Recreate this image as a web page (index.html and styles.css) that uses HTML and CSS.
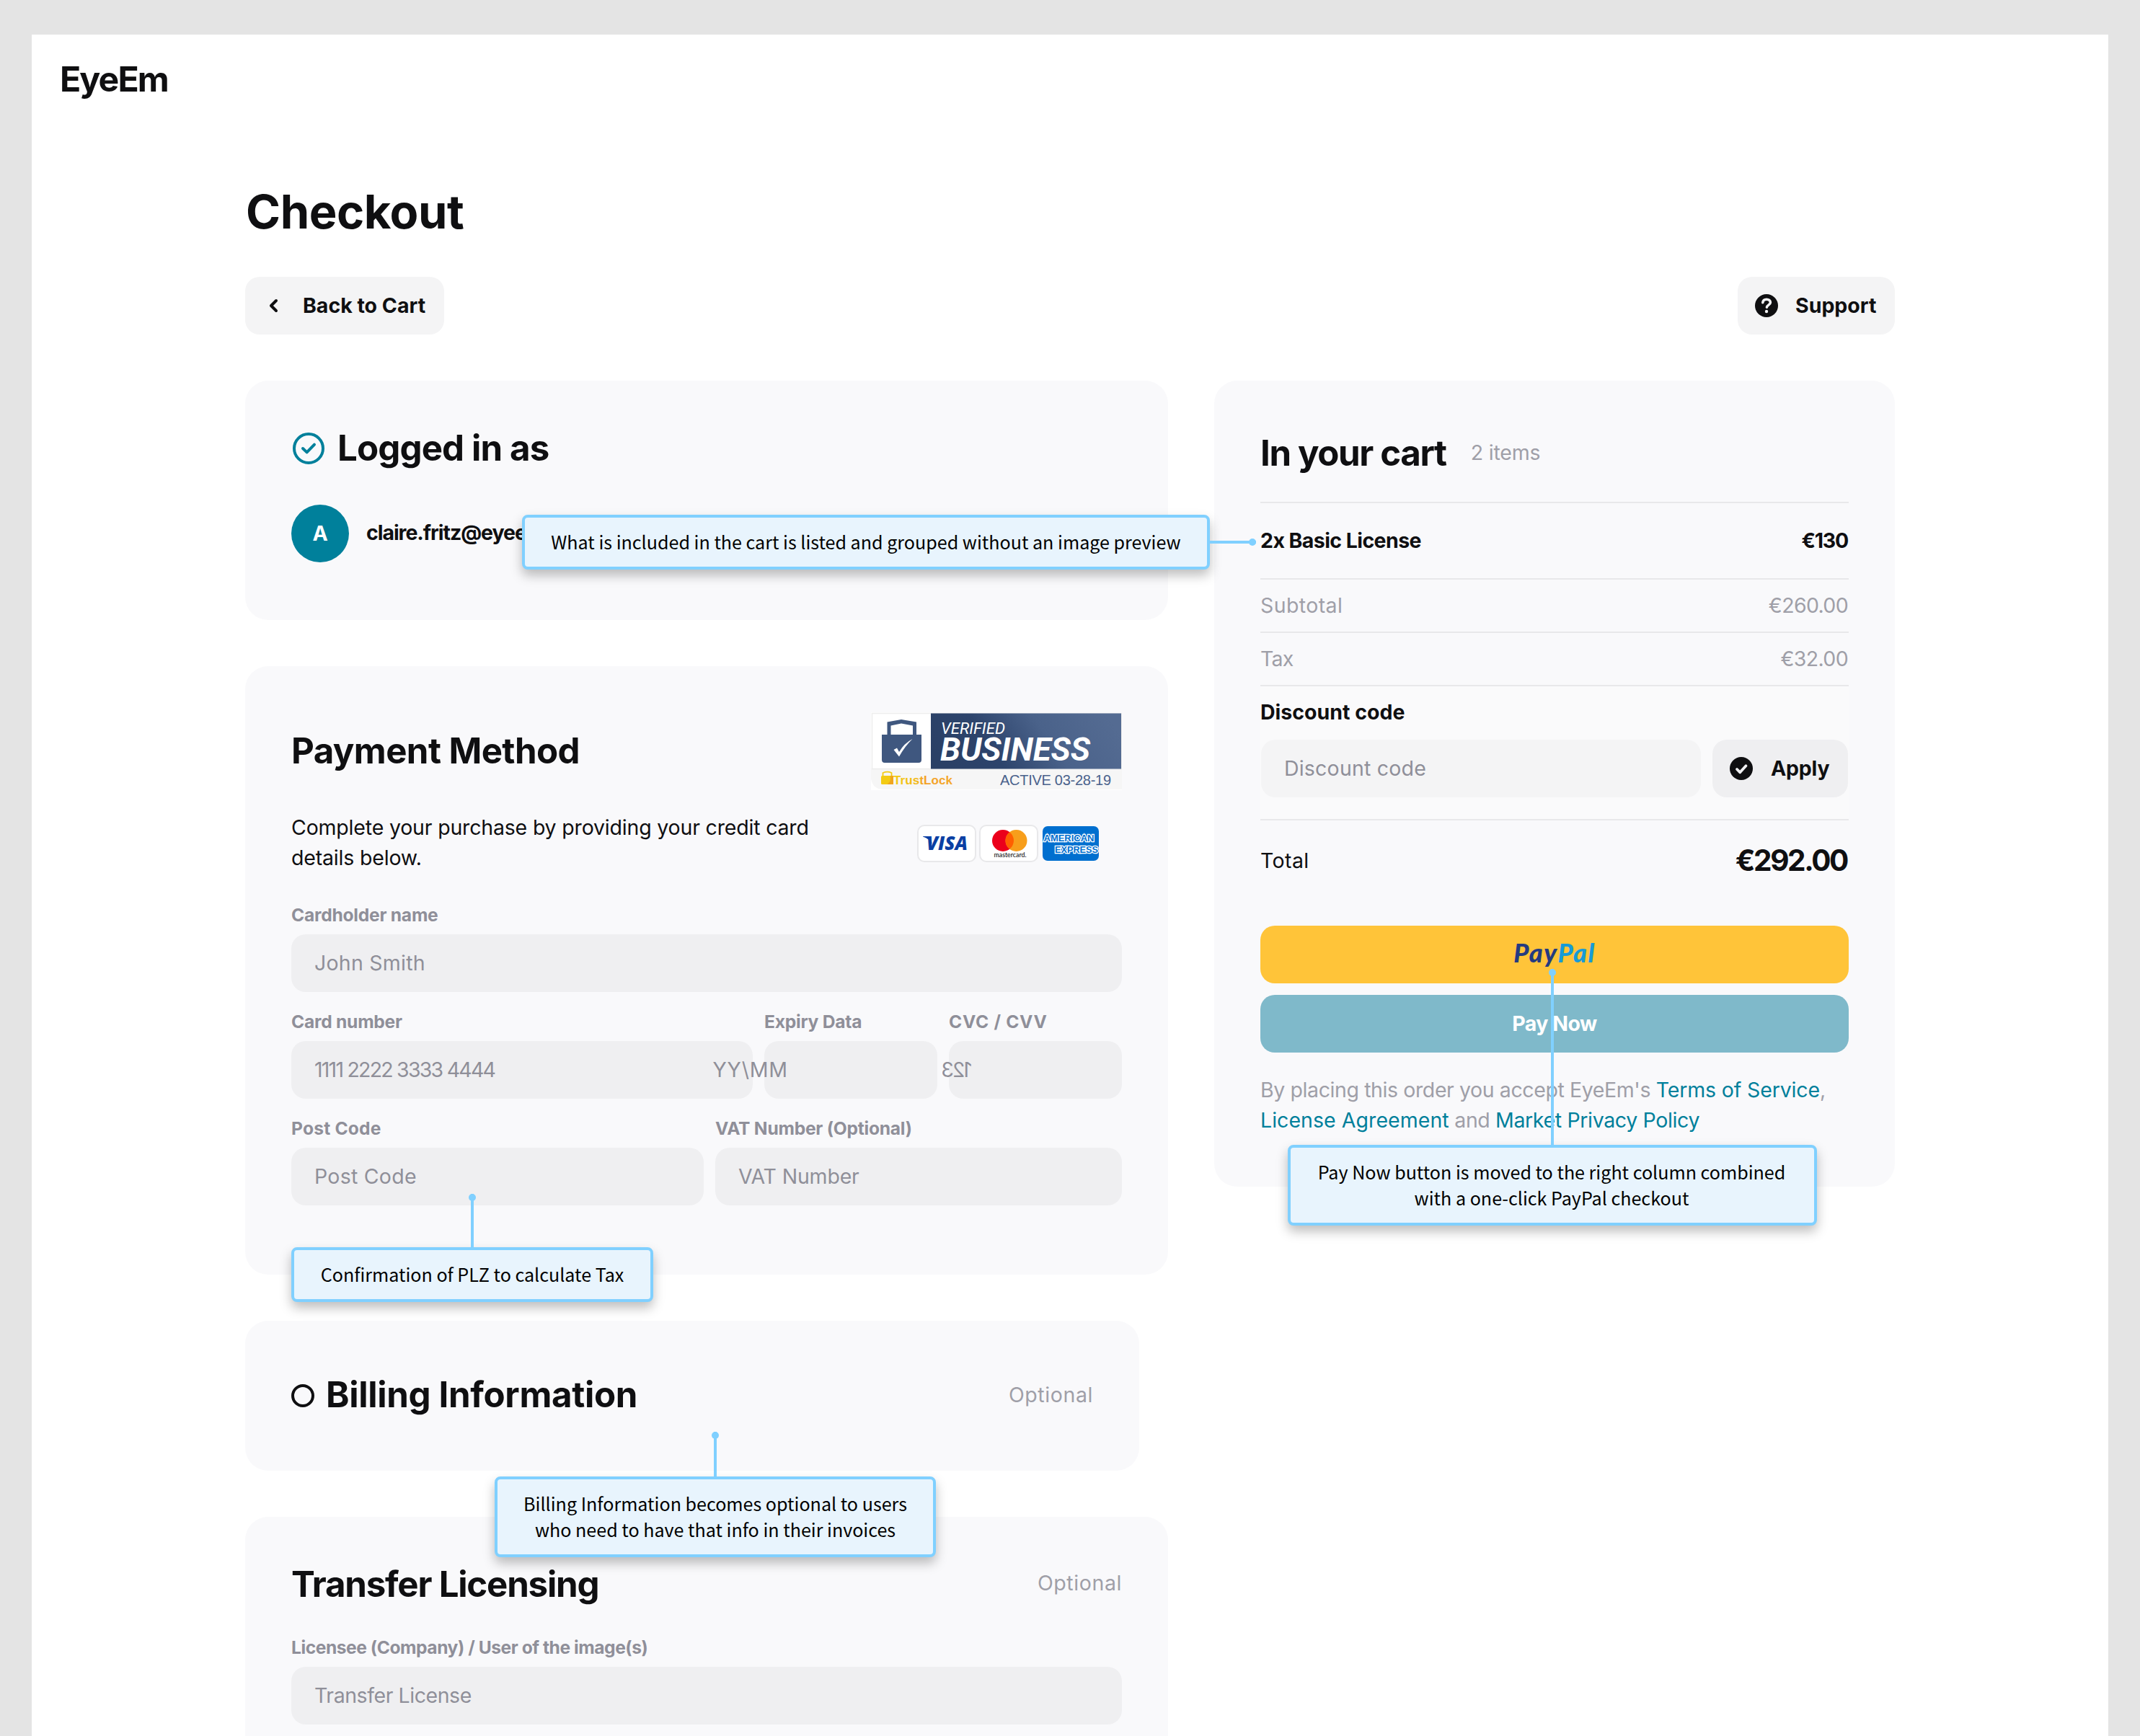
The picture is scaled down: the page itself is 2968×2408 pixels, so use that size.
FILE: index.html
```html
<!DOCTYPE html>
<html lang="en">
<head>
<meta charset="utf-8">
<title>EyeEm – Checkout</title>
<link rel="stylesheet" href="styles.css">
</head>
<body>
<div class="page">
  <header class="topbar"><span class="logo">EyeEm</span></header>
  <main class="content">
    <h1 class="page-title">Checkout</h1>
    <div class="actions">
      <button class="btn btn-back">
        <svg class="icon-chevron" viewBox="0 0 16 24" width="16" height="24"><path d="M12 5L5 12l7 7" fill="none" stroke="#0f0f11" stroke-width="4" stroke-linecap="round" stroke-linejoin="round"/></svg>
        <span>Back to Cart</span>
      </button>
      <button class="btn btn-support">
        <svg viewBox="0 0 32 32" width="32" height="32"><circle cx="16" cy="16" r="16" fill="#0f0f11"/><path d="M10.8 11.6c.3-2.7 2.4-4.4 5.3-4.4 3 0 5.3 1.8 5.3 4.4 0 3.4-5 3.6-5 6.6" fill="none" stroke="#f4f4f5" stroke-width="3.6" stroke-linecap="round"/><circle cx="16" cy="24" r="2.2" fill="#f4f4f5"/></svg>
        <span>Support</span>
      </button>
    </div>

    <div class="columns">
      <div class="col-main">
        <section class="card card-login">
          <div class="login-head">
            <svg class="icon-check" viewBox="0 0 48 48" width="48" height="48" fill="none" stroke="#00809b" stroke-width="4" stroke-linecap="round" stroke-linejoin="round"><circle cx="24" cy="24" r="20"/><path d="M16 24l5.6 5.4L32 18.6"/></svg>
            <h2 class="heading heading-login">Logged in as</h2>
          </div>
          <div class="user">
            <span class="avatar">A</span>
            <span class="email">claire.fritz@eyeem.com</span>
          </div>
        </section>

        <section class="card card-payment">
          <div class="payment-head">
            <h2 class="heading heading-payment">Payment Method</h2>
            <svg class="badge" viewBox="0 0 348 108" width="348" height="108">
              <defs>
                <linearGradient id="navy" x1="0" y1="0.6" x2="1" y2="0.4"><stop offset="0" stop-color="#2a4066"/><stop offset=".3" stop-color="#2d446c"/><stop offset=".62" stop-color="#4a628a"/><stop offset="1" stop-color="#546b92"/></linearGradient>
                <linearGradient id="gold" x1="0" x2="1"><stop offset="0" stop-color="#f3cb13"/><stop offset=".42" stop-color="#f2b81c"/><stop offset=".5" stop-color="#f3a024"/><stop offset="1" stop-color="#f4a92a"/></linearGradient>
              </defs>
              <rect width="348" height="108" fill="#fff"/>
              <path d="M0 78h348v29H16Q2 106 0 92z" fill="#f6f6f6"/>
              <rect x="1.5" y="1.5" width="346" height="77" fill="#fff" stroke="#ededed" stroke-width="1.6"/>
              <rect x="83" y="1.500" width="264" height="77" fill="url(#navy)"/>
              <path d="M15 31h7.500V13.500L42 10l21 3.500V31h7v35q0 4-4 4H19q-4 0-4-4zM27.500 31H58V18.500L42 15.500l-14.500 3z" fill="#3f577f" fill-rule="evenodd"/>
              <path d="M31.500 52l4.500-2.500 3 5.500q7-12 18.500-18Q47 47 39 61.500z" fill="#fff"/>
              <text class="b-verified" x="97" y="30" textLength="89" lengthAdjust="spacingAndGlyphs">VERIFIED</text>
              <text class="b-business" x="96" y="67" textLength="208" lengthAdjust="spacingAndGlyphs">BUSINESS</text>
              <path d="M16.500 89V84q6.500-2.600 12 0v5" fill="none" stroke="#f3cb13" stroke-width="1.800"/>
              <rect x="14" y="88" width="17" height="12" rx="1.500" fill="#f3cb13"/><path d="M31 88v12h-8.500q6.500-5 4-12z" fill="#f0a51f"/>
              <text class="b-trust" x="31" y="100" textLength="82" fill="url(#gold)">TrustLock</text>
              <text class="b-active" x="179" y="100.500" textLength="154">ACTIVE 03-28-19</text>
            </svg>
          </div>

          <div class="intro">
            <p class="intro-text">Complete your purchase by providing your credit card details below.</p>
            <div class="brands">
              <svg viewBox="0 0 82 52" width="82" height="52"><rect x="1" y="1" width="80" height="50" rx="9" fill="#fff" stroke="#e8e8ea" stroke-width="2"/><path d="M8 16h7.500q2.500.4 3.200 3l2 7.500Q17 19.500 8 16.500z" fill="#0a3fa3"/><text class="v-visa" x="13" y="35" textLength="57" lengthAdjust="spacingAndGlyphs">VISA</text></svg>
              <svg viewBox="0 0 82 52" width="82" height="52"><rect x="1" y="1" width="80" height="50" rx="9" fill="#fff" stroke="#e8e8ea" stroke-width="2"/><circle cx="33" cy="22" r="15" fill="#eb001b"/><circle cx="51.500" cy="22" r="15" fill="#f79e1b"/><path d="M42.250 10.200a15 15 0 0 1 0 23.600a15 15 0 0 1 0-23.600z" fill="#ff5f00"/><text class="v-mc" x="20.500" y="44.500" textLength="45" lengthAdjust="spacingAndGlyphs">mastercard.</text></svg>
              <svg class="amex" viewBox="0 0 78 48" width="78" height="48"><rect width="78" height="48" rx="7" fill="#006fcf"/><text class="v-amex" x="1.500" y="20.500" textLength="70" lengthAdjust="spacingAndGlyphs">AMERICAN</text><text class="v-amex" x="17" y="36.500" textLength="60" lengthAdjust="spacingAndGlyphs">EXPRESS</text></svg>
            </div>
          </div>

          <div class="form">
            <div class="row">
              <label class="field"><span class="label">Cardholder name</span><span class="input input-name">John Smith</span></label>
            </div>
            <div class="row row-card">
              <label class="field"><span class="label">Card number</span><span class="input digits">1111 2222 3333 4444</span></label>
              <label class="field"><span class="label">Expiry Data</span><span class="input"><span class="flip flip-date">MM/YY</span></span></label>
              <label class="field"><span class="label label-cvc">CVC / CVV</span><span class="input"><span class="flip flip-cvc">123</span></span></label>
            </div>
            <div class="row row-post">
              <label class="field"><span class="label label-post">Post Code</span><span class="input input-name">Post Code</span></label>
              <label class="field"><span class="label">VAT Number (Optional)</span><span class="input">VAT Number</span></label>
            </div>
          </div>
        </section>

        <section class="card card-billing">
          <span class="radio"></span>
          <h2 class="heading heading-billing">Billing Information</h2>
          <span class="optional">Optional</span>
        </section>

        <section class="card card-transfer">
          <div class="transfer-head">
            <h2 class="heading heading-transfer">Transfer Licensing</h2>
            <span class="optional">Optional</span>
          </div>
          <label class="field"><span class="label label-licensee">Licensee (Company) / User of the image(s)</span><span class="input input-transfer">Transfer License</span></label>
        </section>
      </div>

      <aside class="card card-cart">
        <div class="cart-head"><h2 class="heading heading-cart">In your cart</h2><span class="count">2 items</span></div>
        <div class="line line-item"><span>2x Basic License</span><span class="price">€130</span></div>
        <div class="line line-muted"><span class="subtotal">Subtotal</span><span class="amount">€260.00</span></div>
        <div class="line line-muted"><span class="tax">Tax</span><span class="amount">€32.00</span></div>
        <div class="discount">
          <div class="discount-title">Discount code</div>
          <div class="discount-row">
            <span class="input input-discount">Discount code</span>
            <button class="btn btn-apply">
              <svg viewBox="0 0 32 32" width="32" height="32"><circle cx="16" cy="16" r="16" fill="#0f0f11"/><path d="M10 17l4.300 4.300L22.500 12.300" fill="none" stroke="#f0f0f2" stroke-width="3.800" stroke-linecap="round" stroke-linejoin="round"/></svg>
              <span>Apply</span>
            </button>
          </div>
        </div>
        <div class="total"><span class="total-label">Total</span><span class="total-sum">€292.00</span></div>
        <button class="pay pay-paypal"><span class="pp-dark">Pay</span><span class="pp-light">Pal</span></button>
        <button class="pay pay-now">Pay Now</button>
        <p class="terms">By placing this order you accept EyeEm's <a>Terms of Service</a>,<br><a class="link-license">License Agreement</a> and <a class="link-privacy">Market Privacy Policy</a></p>
      </aside>
    </div>
  </main>
</div>

<div class="note note-cart">What is included in the cart is listed and grouped without an image preview<i class="pin"></i></div>
<div class="note note-post">Confirmation of PLZ to calculate Tax<i class="pin"></i></div>
<div class="note note-billing">Billing Information becomes optional to users<br>who need to have that info in their invoices<i class="pin"></i></div>
<div class="note note-pay">Pay Now button is moved to the right column combined<br>with a one-click PayPal checkout<i class="pin"></i></div>
</body>
</html>
```
FILE: styles.css
```css
* { box-sizing: border-box; }

body {
  margin: 0;
  position: relative;
  height: 2408px;
  padding: 48px 44px 0;
  overflow: hidden;
  background: #e4e4e4;
  color: #0f0f11;
  font: 400 28.5px/42px Inter, "Liberation Sans", sans-serif;
  letter-spacing: -.18px;
}

h1, h2, p { margin: 0; }
svg { display: block; flex: none; }
button { border: 0; font: inherit; color: inherit; letter-spacing: inherit; }

.page { height: 2360px; overflow: hidden; background: #fff; }
.topbar { height: 90px; padding: 32px 0 0 39px; }
.logo { display: block; font-weight: 700; font-size: 48.2px; line-height: 60px; letter-spacing: -1.9px; }
.content { padding: 114px 296px 0; }
.page-title { padding-left: 1px; font-size: 65px; line-height: 84px; margin-bottom: -4px; letter-spacing: -.44px; }

/* toolbar */
.actions { display: flex; justify-content: space-between; margin-top: 52px; }
.btn {
  display: flex;
  align-items: center;
  height: 80px;
  padding: 0;
  border-radius: 20px;
  background: #f4f4f5;
  font-weight: 700;
  letter-spacing: 0;
}
.btn-back { width: 276px; padding-left: 31px; gap: 33px; }
.btn-support { width: 218px; padding-left: 24px; gap: 24px; }
.btn-apply { width: 188px; padding-left: 24px; gap: 25px; background: #efeff1; letter-spacing: -.2px; }

/* cards */
.columns { display: flex; justify-content: space-between; align-items: flex-start; margin-top: 64px; }
.col-main { display: flex; flex-direction: column; gap: 64px; width: 1280px; }
.card { padding: 64px; border-radius: 32px; background: #f9f9fb; }
.heading { margin-bottom: -4px; font-size: 49.2px; line-height: 68px; font-weight: 700; }

.card-login { height: 332px; padding-top: 59px; }
.login-head { display: flex; align-items: center; gap: 16px; height: 64px; }
.icon-check { margin-top: 6px; }
.heading-login { letter-spacing: -.87px; }
.user { display: flex; align-items: center; gap: 24px; margin-top: 49px; }
.avatar {
  width: 80px;
  height: 80px;
  border-radius: 50%;
  background: #00809b;
  color: #fff;
  font-weight: 700;
  line-height: 80px;
  text-align: center;
}
.email { margin-top: -2px; font-weight: 700; letter-spacing: -1.05px; }

.card-payment { height: 844px; }
.payment-head { display: flex; justify-content: space-between; height: 108px; }
.heading-payment { margin-top: 19px; letter-spacing: -.58px; }
.b-verified { font: italic 400 22.8px Roboto, sans-serif; fill: #fff; letter-spacing: 0; }
.b-business { font: italic 700 43.5px Roboto, sans-serif; fill: #fff; letter-spacing: 0; }
.b-trust { font: 700 17px "Liberation Sans", sans-serif; letter-spacing: 0; }
.b-active { font: 400 20px "Liberation Sans", sans-serif; fill: #4a628c; letter-spacing: 0; }

.intro { display: flex; justify-content: space-between; margin-top: 30px; padding-right: 32px; }
.intro-text { width: 760px; padding-top: 1px; margin-bottom: -1px; }
.brands { display: flex; gap: 4px; margin-top: 18px; }
.amex { margin: 2px 0 0 2px; }
.v-visa { font: italic 800 26px "Open Sans", sans-serif; fill: #0a3fa3; letter-spacing: 0; }
.v-mc { font: 500 8.5px Lato, sans-serif; fill: #111; letter-spacing: 0; }
.v-amex {
  font: 700 13.5px "Liberation Sans", sans-serif;
  fill: #006fcf;
  stroke: #fff;
  stroke-width: 2.6px;
  paint-order: stroke;
  letter-spacing: 0;
}

.form { display: flex; flex-direction: column; gap: 24px; margin-top: 42px; }
.row { display: grid; gap: 16px; }
.row-card { grid-template-columns: 640px 240px 240px; }
.row-post { grid-template-columns: 572px 564px; }
.field { display: flex; flex-direction: column; gap: 12px; }
.label { color: #8f8f99; font-size: 24.6px; line-height: 34px; margin-bottom: -2px; font-weight: 700; letter-spacing: -.24px; }
.label-cvc { letter-spacing: .7px; }
.label-post { letter-spacing: .2px; }
.label-licensee { letter-spacing: -.45px; }
.input {
  display: flex;
  align-items: center;
  height: 80px;
  padding: 0 32px;
  border-radius: 20px;
  background: #efeff1;
  color: #8f8f99;
}
.input-name { letter-spacing: .25px; }
.input-transfer { letter-spacing: -.44px; }
.digits { letter-spacing: -1.78px; }
.flip { display: block; transform: scaleX(-1); transform-origin: left; }
.flip-date { letter-spacing: .8px; }
.flip-cvc { letter-spacing: -2px; }

.card-billing { display: flex; align-items: center; width: 1240px; height: 208px; }
.radio { width: 32px; height: 32px; border: 4px solid #0f0f11; border-radius: 50%; }
.heading-billing { margin: -4px 0 0 16px; letter-spacing: -.33px; }
.optional { margin-left: auto; color: #9f9fa8; letter-spacing: .6px; }
.card-billing .optional { margin-top: -2px; }

.card-transfer { padding-top: 59px; padding-bottom: 96px; }
.transfer-head { display: flex; align-items: center; height: 64px; margin-bottom: 41px; }
.transfer-head .optional { margin-top: 2px; }
.heading-transfer { letter-spacing: -1.22px; }

/* cart */
.card-cart { width: 944px; height: 1118px; padding-top: 66px; }
.cart-head { display: flex; align-items: center; height: 64px; margin-bottom: 38px; }
.heading-cart { letter-spacing: -1.38px; }
.count { margin: 3px 0 0 34px; color: #9f9fa8; }
.line {
  display: flex;
  justify-content: space-between;
  align-items: center;
  height: 74px;
  border-top: 2px solid #e8e8ea;
}
.line-item { height: 106px; font-weight: 700; letter-spacing: -.57px; }
.price { margin-right: 1px; letter-spacing: -1.2px; }
.line-muted { height: 74px; color: #9f9fa8; }
.subtotal { letter-spacing: .4px; }
.tax { letter-spacing: -.8px; }
.amount { margin-right: 1px; letter-spacing: -.66px; }
.discount { height: 186px; padding-top: 15px; border-top: 2px solid #e8e8ea; background: #fafafb; }
.discount-title { font-weight: 700; letter-spacing: 0; }
.discount-row { display: flex; gap: 16px; margin-top: 17px; padding: 0 1px; }
.input-discount { width: 610px; background: #f4f4f5; letter-spacing: .2px; }
.total {
  display: flex;
  justify-content: space-between;
  align-items: center;
  height: 114px;
  border-top: 2px solid #e8e8ea;
}
.total-label { letter-spacing: .4px; }
.total-sum { margin-right: 2px; font-size: 40.5px; font-weight: 700; letter-spacing: -2.4px; }
.pay {
  display: flex;
  align-items: center;
  justify-content: center;
  width: 100%;
  height: 80px;
  padding: 0;
  border-radius: 20px;
  font-weight: 700;
}
.pay-paypal { margin-top: 34px; padding-bottom: 6px; background: #ffc439; font-family: Lato, sans-serif; font-size: 36px; font-style: italic; font-weight: 900; letter-spacing: 1.5px; }
.pp-dark { color: #253b80; }
.pp-light { color: #179bd7; }
.pay-now { margin-top: 16px; background: #7fb9ca; color: #fff; letter-spacing: -.51px; }
.terms { margin-top: 31px; color: #9f9fa8; letter-spacing: -.4px; white-space: nowrap; }
.terms a { color: #00809b; letter-spacing: -.15px; }
.terms .link-license { letter-spacing: .05px; }
.terms .link-privacy { letter-spacing: -.35px; }

/* annotations pinned over the screen */
.note {
  position: absolute;
  display: block;
  padding: 15px 0 17px;
  border: 4px solid #80d0ff;
  border-radius: 8px;
  background: #e8f4fd;
  box-shadow: 0 8px 16px rgba(0, 0, 0, .26);
  color: #000;
  font: 400 25.08px/36px "Noto Sans CJK SC", sans-serif;
  letter-spacing: 0;
  text-align: center;
  white-space: nowrap;
}
.pin { position: absolute; width: 4px; background: #80d0ff; }
.pin::before {
  content: "";
  position: absolute;
  left: -3px;
  top: 0;
  width: 10px;
  height: 10px;
  border-radius: 50%;
  background: #80d0ff;
}
.note-cart { left: 724px; top: 714px; width: 954px; height: 76px; }
.note-cart .pin { left: 950px; top: 32px; width: 64px; height: 4px; }
.note-cart .pin::before { left: auto; right: 0; top: -3px; }
.note-post { left: 404px; top: 1730px; width: 502px; height: 76px; }
.note-post .pin { left: 245px; bottom: 72px; height: 74px; }
.note-billing { left: 686px; top: 2048px; width: 612px; height: 112px; }
.note-billing .pin { left: 300px; bottom: 108px; height: 62px; }
.note-pay { left: 1786px; top: 1588px; width: 734px; height: 112px; padding-right: 2px; }
.note-pay .pin { left: 361px; bottom: 108px; height: 244px; }
```
